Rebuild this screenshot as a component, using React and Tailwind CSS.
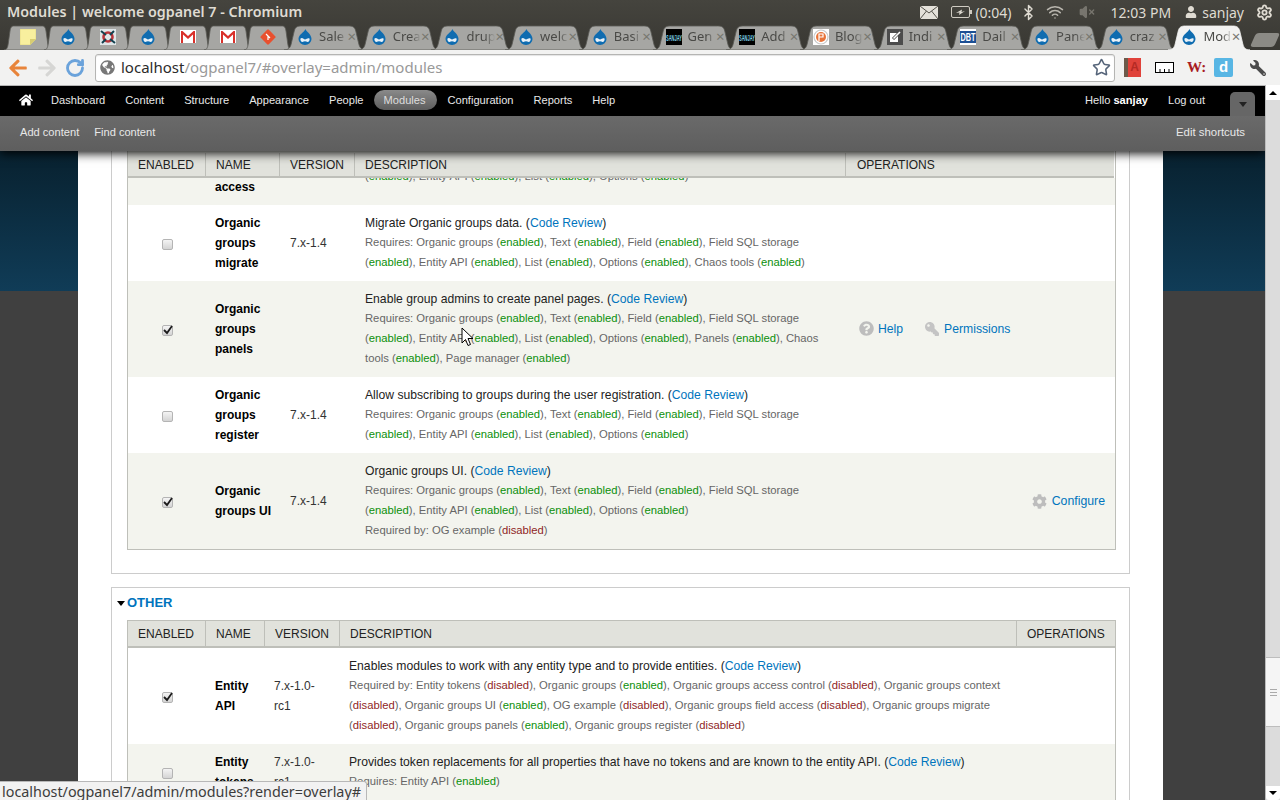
import React from 'react';
import { Bluetooth, Wifi, VolumeX, RotateCw, Star, Settings } from 'lucide-react';
import { FaHome, FaKey, FaCog, FaQuestionCircle, FaUser, FaGlobeAmericas, FaArrowLeft, FaArrowRight, FaWrench } from 'react-icons/fa';

const PINNED = ['note', 'drupal', 'ring', 'drupal', 'gmail', 'gmail', 'git'];
const TABS = [
  ['drupal', 'Sale'], ['drupal', 'Crea'], ['drupal', 'drup'], ['drupal', 'welc'], ['drupal', 'Basi'],
  ['sanjay', 'Gen'], ['sanjay', 'Add'], ['blog', 'Blog'], ['edit', 'Indi'], ['dbt', 'Dail'],
  ['drupal', 'Pane'], ['drupal', 'craz'],
];

const TABLE_ONE = [
  {
    name: 'Organic groups migrate', version: '7.x-1.4', check: false,
    title: 'Migrate Organic groups data.',
    info: 'Requires: Organic groups (enabled), Text (enabled), Field (enabled), Field SQL storage (enabled), Entity API (enabled), List (enabled), Options (enabled), Chaos tools (enabled)',
  },
  {
    name: 'Organic groups panels', version: '', check: true, ops: 'panels',
    title: 'Enable group admins to create panel pages.',
    info: 'Requires: Organic groups (enabled), Text (enabled), Field (enabled), Field SQL storage (enabled), Entity API (enabled), List (enabled), Options (enabled), Panels (enabled), Chaos tools (enabled), Page manager (enabled)',
  },
  {
    name: 'Organic groups register', version: '7.x-1.4', check: false,
    title: 'Allow subscribing to groups during the user registration.',
    info: 'Requires: Organic groups (enabled), Text (enabled), Field (enabled), Field SQL storage (enabled), Entity API (enabled), List (enabled), Options (enabled)',
  },
  {
    name: 'Organic groups UI', version: '7.x-1.4', check: true, ops: 'configure',
    title: 'Organic groups UI.',
    info: 'Requires: Organic groups (enabled), Text (enabled), Field (enabled), Field SQL storage (enabled), Entity API (enabled), List (enabled), Options (enabled)',
    extra: 'Required by: OG example (disabled)',
  },
];

const TABLE_TWO = [
  {
    name: 'Entity API', version: '7.x-1.0-rc1', check: true,
    title: 'Enables modules to work with any entity type and to provide entities.',
    info: 'Required by: Entity tokens (disabled), Organic groups (enabled), Organic groups access control (disabled), Organic groups context (disabled), Organic groups UI (enabled), OG example (disabled), Organic groups field access (disabled), Organic groups migrate (disabled), Organic groups panels (enabled), Organic groups register (disabled)',
  },
  {
    name: 'Entity tokens', version: '7.x-1.0-rc1', check: false,
    title: 'Provides token replacements for all properties that have no tokens and are known to the entity API.',
    info: 'Requires: Entity API (enabled)',
  },
];

function Favicon({ kind }) {
  if (kind === 'drupal') {
    return (
      <svg width="16" height="16" viewBox="0 0 16 16" className="shrink-0">
        <path d="M8.5 0C9 2.5 14.5 5 14.5 10A6.5 6 0 0 1 1.5 10C1.5 5.5 7 3.5 8.5 0Z" fill="#0f6cb0" />
        <path d="M3.5 9.5C5 8 7 10 8 10.5C9.5 10 11 8.5 12.5 9.5C13 11 12 13 10.5 13C9 12 7 12 5.5 13C4 13 3 11 3.5 9.5Z" fill="#e8f1f8" />
      </svg>
    );
  }
  if (kind === 'note') {
    return (
      <svg width="16" height="16" viewBox="0 0 16 16" className="shrink-0">
        <path d="M0 0H16V10L10 16H0Z" fill="#f8ef9e" stroke="#d9cf7a" strokeWidth="0.6" />
        <path d="M10 16V10H16Z" fill="#d8cd72" />
      </svg>
    );
  }
  if (kind === 'gmail') {
    return (
      <svg width="16" height="13" viewBox="0 0 16 13" className="shrink-0">
        <rect width="16" height="13" fill="#ffffff" />
        <path d="M1 13V1H2.5L8 6L13.5 1H15V13H13V4.5L8 9L3 4.5V13Z" fill="#d9302a" />
      </svg>
    );
  }
  if (kind === 'ring') {
    return (
      <svg width="16" height="16" viewBox="0 0 16 16" className="shrink-0">
        <rect width="16" height="16" fill="#dfe6e8" />
        <circle cx="8" cy="8" r="4.5" fill="none" stroke="#b8343a" strokeWidth="2.6" />
        <path d="M1 2L6 6M15 14L10 10M14 2L10 6M2 14L6 10" stroke="#12404f" strokeWidth="2" />
      </svg>
    );
  }
  if (kind === 'git') {
    return (
      <svg width="16" height="16" viewBox="0 0 16 16" className="shrink-0">
        <rect x="2.3" y="2.3" width="11.4" height="11.4" rx="1.2" transform="rotate(45 8 8)" fill="#e8502f" />
        <path d="M6 5L10 9M8 7V11" stroke="#ffffff" strokeWidth="1.2" />
      </svg>
    );
  }
  if (kind === 'sanjay') {
    return (
      <svg width="16" height="16" viewBox="0 0 16 16" className="shrink-0">
        <rect width="16" height="16" fill="#000000" />
        <text x="0" y="11.5" textLength="16" lengthAdjust="spacingAndGlyphs" fontSize="9" fontWeight="bold" fontFamily="Liberation Sans, sans-serif" fill="#7fd3e4">SANJAY</text>
      </svg>
    );
  }
  if (kind === 'blog') {
    return (
      <svg width="16" height="16" viewBox="0 0 16 16" className="shrink-0">
        <rect width="16" height="16" fill="#ffffff" />
        <circle cx="8" cy="8" r="7" fill="none" stroke="#c9c9c9" strokeWidth="1.2" />
        <circle cx="8" cy="8" r="5" fill="#e8743a" />
        <path d="M6 12V5H10V8H6" fill="none" stroke="#ffffff" strokeWidth="1.2" />
      </svg>
    );
  }
  if (kind === 'edit') {
    return (
      <svg width="16" height="16" viewBox="0 0 16 16" className="shrink-0">
        <rect width="16" height="16" fill="#4c4c4c" />
        <rect x="3" y="4" width="8" height="9" fill="#ffffff" />
        <path d="M6 10L13 3" stroke="#4c4c4c" strokeWidth="3" />
        <path d="M6.5 9.5L13 3" stroke="#ffffff" strokeWidth="1.6" />
      </svg>
    );
  }
  return (
    <svg width="16" height="16" viewBox="0 0 16 16" className="shrink-0">
      <rect width="16" height="16" fill="#ffffff" />
      <rect y="2" width="16" height="12" fill="#1c4f94" />
      <text x="0.5" y="12" textLength="15" lengthAdjust="spacingAndGlyphs" fontSize="11" fontWeight="bold" fontFamily="Liberation Sans, sans-serif" fill="#ffffff">DBT</text>
    </svg>
  );
}

function TabShape({ active }) {
  return (
    <svg className="absolute inset-0 w-full h-full" viewBox="0 0 80 25" preserveAspectRatio="none">
      <path
        d="M0 25C4 25 6 23 7 19L10 6C11 2 13 1 17 1H63C67 1 69 2 70 6L73 19C74 23 76 25 80 25Z"
        fill={active ? '#f2f2f1' : '#a6a6a3'}
        stroke={active ? '#f2f2f1' : '#5a5a56'}
        strokeWidth="0.8"
        vectorEffect="non-scaling-stroke"
      />
    </svg>
  );
}

function PinnedTab({ kind }) {
  return (
    <div className="relative w-[48px] h-[25px] -mr-[8px] shrink-0 flex items-center justify-center pb-[2px]">
      <TabShape />
      <div className="relative"><Favicon kind={kind} /></div>
    </div>
  );
}

function Tab({ kind, label, active }) {
  return (
    <div className={`relative w-[82px] h-[25px] -mr-[8.3px] shrink-0 flex items-center pl-[13px] pr-[10px] pb-[2px] ${active ? 'z-10' : ''}`}>
      <TabShape active={active} />
      <div className="relative"><Favicon kind={kind} /></div>
      <div className="relative ml-[6px] w-[29px] whitespace-nowrap text-[13px] text-[#4a4a47] [mask-image:linear-gradient(to_right,black_65%,transparent)]">
        {label}
      </div>
      <div className="relative ml-auto text-[15px] leading-none text-[#77776f]">×</div>
    </div>
  );
}

function TitleBar() {
  return (
    <div className="h-[24px] flex items-center justify-between text-[#dfdbd2]">
      <div className="pl-[7px] text-[14.3px] font-semibold whitespace-nowrap">Modules | welcome ogpanel 7 - Chromium</div>
      <div className="flex items-center text-[14px] whitespace-nowrap pr-[7px]">
        <svg width="18" height="13" viewBox="0 0 18 13">
          <rect width="18" height="13" fill="#e4e1da" />
          <path d="M0 0L9 7L18 0M0 13L6.5 5M18 13L11.5 5" fill="none" stroke="#55534c" strokeWidth="1" />
        </svg>
        <svg width="21" height="12" viewBox="0 0 21 12" className="ml-[13px]">
          <rect x="0.5" y="0.5" width="18" height="11" rx="1.5" fill="none" stroke="#cfcbc2" />
          <rect x="19" y="4" width="2" height="4" fill="#cfcbc2" />
          <path d="M5 7L11 3.5L10.5 6L14 5L8 9L8.5 6.5Z" fill="#dfdbd2" />
        </svg>
        <span className="ml-[3px]">(0:04)</span>
        <Bluetooth size={17} className="ml-[8px]" />
        <Wifi size={18} className="ml-[9px] text-[#b9b6ae]" />
        <VolumeX size={16} fill="currentColor" className="ml-[15px] text-[#77756e]" />
        <span className="ml-[16px]">12:03 PM</span>
        <FaUser size={12} className="ml-[14px]" />
        <span className="ml-[5px]">sanjay</span>
        <Settings size={17} strokeWidth={2.6} className="ml-[12px]" />
      </div>
    </div>
  );
}

function TabStrip() {
  return (
    <div className="h-[26px] flex items-end pl-[4px] overflow-hidden">
      {PINNED.map((kind, i) => <PinnedTab key={i} kind={kind} />)}
      {TABS.map(([kind, label], i) => <Tab key={i} kind={kind} label={label} />)}
      <Tab kind="drupal" label="Mod" active />
      <div className="relative w-[24px] h-[14px] ml-[11px] mb-[3px] shrink-0 bg-[#8b8a85] rounded-[3px] -skew-x-[24deg]" />
    </div>
  );
}

function AddressBar() {
  return (
    <div className="h-[35px] bg-[#f2f2f1] flex items-center">
      <FaArrowLeft size={20} className="ml-[8px] text-[#e8843a]" />
      <FaArrowRight size={20} className="ml-[9px] text-[#d6d6d4]" />
      <RotateCw size={20} strokeWidth={3.4} className="ml-[8px] text-[#6ba3db]" />
      <div className="ml-[10px] w-[1020px] h-[28px] bg-white border border-[#b5b5b3] rounded-[3px] flex items-center pl-[3px] pr-[3px] shadow-[inset_0_1px_1px_#e4e4e4]">
        <FaGlobeAmericas size={15} className="ml-[1px] text-[#777777]" />
        <div className="ml-[6px] text-[15px] whitespace-nowrap text-[#999999]">
          <span className="text-[#2b2b2b]">localhost</span>/ogpanel7/#overlay=admin/modules
        </div>
        <Star size={19} strokeWidth={2} className="ml-auto text-[#56657a]" />
      </div>
      <div className="ml-[9px] w-[17px] h-[19px] flex shrink-0">
        <div className="w-[4px] bg-[#6d5a4a]" />
        <div className="flex-1 bg-[#e0423a] text-[#b52a24] text-[12px] font-bold leading-[18px] text-center font-['Liberation_Sans',sans-serif]">A</div>
      </div>
      <svg width="19" height="11" viewBox="0 0 19 11" className="ml-[14px] shrink-0">
        <rect x="0.5" y="0.5" width="18" height="10" fill="#ffffff" stroke="#000000" />
        <path d="M5 10V7M9.5 10V7M14 10V7" stroke="#000000" />
      </svg>
      <div className="ml-[13px] w-[15px] text-[15px] font-bold leading-none whitespace-nowrap text-[#a81c22] font-['Liberation_Serif',serif]">W:</div>
      <div className="ml-[12px] w-[19px] h-[19px] rounded-[2px] bg-[#58b6e4] flex items-center justify-center text-white text-[15px] font-bold font-['Liberation_Sans',sans-serif] shrink-0">d</div>
      <FaWrench size={16} className="ml-[17px] -scale-x-100 text-[#4b4b4b]" />
    </div>
  );
}

function Toolbar() {
  const items = ['Dashboard', 'Content', 'Structure', 'Appearance', 'People', 'Modules', 'Configuration', 'Reports', 'Help'];
  return (
    <div className="relative z-20 shadow-[0_2px_10px_#000000] text-[11.1px] font-['Liberation_Sans',sans-serif] border-t border-[#b5b5b5]">
      <div className="h-[30px] pb-[2px] bg-black flex items-center text-[#e8e8e8] whitespace-nowrap">
        <FaHome size={14} className="ml-[19px] mr-[8px] text-white" />
        {items.map(item => (
          <div
            key={item}
            className={`leading-[20px] ${item === 'Modules' ? 'pl-[10px] pr-[12px] bg-[linear-gradient(to_bottom,#8a8a8a,#5c5c5c)] rounded-[10px] text-[#dddddd]' : 'px-[10px]'}`}
          >
            {item}
          </div>
        ))}
        <div className="ml-auto px-[10px]">Hello <b className="text-white">sanjay</b></div>
        <div className="px-[10px]">Log out</div>
        <div className="ml-[15px] mr-[10px] self-end -mb-[2px] w-[25px] h-[24px] bg-[#666666] rounded-t-[5px] flex items-center justify-center">
          <div className="w-0 h-0 border-x-[4px] border-x-transparent border-t-[5px] border-t-[#222222]" />
        </div>
      </div>
      <div className="h-[35px] pb-[2px] bg-[linear-gradient(to_bottom,#6a6a6a,#5e5e5e)] flex items-center text-[#e8e8e8] whitespace-nowrap">
        <div className="ml-[20px]">Add content</div>
        <div className="ml-[15px]">Find content</div>
        <div className="ml-auto mr-[20px] text-[11.4px]">Edit shortcuts</div>
      </div>
    </div>
  );
}

function Checkbox({ checked }) {
  return (
    <div className="relative w-[11px] h-[11px] mt-[3px] rounded-[2px] border border-[#b4b4b4] bg-[linear-gradient(to_bottom,#f4f4f4,#d4d4d4)]">
      {checked && (
        <svg width="12" height="12" viewBox="0 0 12 12" className="absolute -top-[2px] -left-[0.5px]">
          <path d="M2 6L5 9L10 2" fill="none" stroke="#1c1c1c" strokeWidth="1.8" />
        </svg>
      )}
    </div>
  );
}

// pinta (enabled) y (disabled) con su color
function withStatus(text) {
  return text.split(/(enabled|disabled)/).map((part, i) => {
    if (part === 'enabled') return <span key={i} className="text-[#0a8f0a]">enabled</span>;
    if (part === 'disabled') return <span key={i} className="text-[#8f1f1f]">disabled</span>;
    return part;
  });
}

function Operations({ kind }) {
  if (kind === 'panels') {
    return (
      <div className="flex items-center pl-[13px] whitespace-nowrap text-[12.2px]">
        <FaQuestionCircle size={15} className="text-[#bdbdbd]" />
        <a className="ml-[4px] text-[#0074bd]">Help</a>
        <FaKey size={14} className="ml-[22px] -scale-x-100 text-[#c4c4c4]" />
        <a className="ml-[5px] text-[#0074bd]">Permissions</a>
      </div>
    );
  }
  if (kind === 'configure') {
    return (
      <div className="flex items-center justify-end pr-[10px] whitespace-nowrap text-[12.3px]">
        <FaCog size={15} className="mr-[5px] text-[#bdbdbd]" />
        <a className="text-[#0074bd]">Configure</a>
      </div>
    );
  }
  return null;
}

function ModuleRow({ mod, even, cols }) {
  return (
    <div className={`grid items-center ${cols} ${even ? 'bg-[#f3f4ee]' : 'bg-white'}`}>
      <div className="flex justify-center"><Checkbox checked={mod.check} /></div>
      <div className="pl-[9px] pr-[5px] font-bold text-black leading-[20px]">{mod.name}</div>
      <div className="pl-[9px] pr-[20px] text-[#333333] leading-[20px]">{mod.version}</div>
      <div className="pl-[9px] pr-[5px] pt-[8px] pb-[9px] leading-[20px] text-[#222222]">
        <div className="text-[12.16px]">{mod.title} (<a className="text-[#0074bd]">Code Review</a>)</div>
        <div className="-mt-[1px] text-[11.26px] text-[#666666]">{withStatus(mod.info)}</div>
        {mod.extra && <div className="text-[11.26px] text-[#666666]">{withStatus(mod.extra)}</div>}
      </div>
      <Operations kind={mod.ops} />
    </div>
  );
}

function HeaderCell({ children, className }) {
  return (
    <div className={`h-full flex items-center border-r border-[#bebfb9] ${className}`}>{children}</div>
  );
}

function FirstTable() {
  const cols = 'grid-cols-[78px_75px_75px_490px_1fr]';
  return (
    <div className="border-x border-b border-[#bebfb9]">
      <div className="h-[27px] pt-[2px] w-[986px] bg-[#e1e2dc] border-b-2 border-[#bebfb9] grid grid-cols-[78px_74px_75px_491px_1fr] items-center text-[#222222]">
        <HeaderCell className="pl-[10px]">ENABLED</HeaderCell>
        <HeaderCell className="pl-[10px]">NAME</HeaderCell>
        <HeaderCell className="pl-[10px]">VERSION</HeaderCell>
        <HeaderCell className="pl-[10px]">DESCRIPTION</HeaderCell>
        <div className="pl-[11px]">OPERATIONS</div>
      </div>
      <div className={`h-[27px] overflow-hidden grid ${cols} bg-[#f3f4ee]`}>
        <div />
        <div className="pl-[9px] -mt-[1px] font-bold leading-[20px]">access</div>
        <div />
        <div className="pl-[9px] -mt-[12px] text-[11.26px] leading-[20px] text-[#666666] whitespace-nowrap">
          {withStatus('(enabled), Entity API (enabled), List (enabled), Options (enabled)')}
        </div>
      </div>
      {TABLE_ONE.map((mod, i) => <ModuleRow key={mod.name} mod={mod} even={i % 2 === 1} cols={cols} />)}
    </div>
  );
}

function SecondTable() {
  const cols = 'grid-cols-[78px_59px_75px_675px_1fr]';
  return (
    <div className="border-x border-t border-[#bebfb9]">
      <div className="h-[27px] bg-[#e1e2dc] border-b-2 border-[#bebfb9] grid grid-cols-[78px_59px_75px_677px_1fr] items-center text-[#222222]">
        <HeaderCell className="pl-[10px]">ENABLED</HeaderCell>
        <HeaderCell className="pl-[10px]">NAME</HeaderCell>
        <HeaderCell className="pl-[10px]">VERSION</HeaderCell>
        <HeaderCell className="pl-[10px]">DESCRIPTION</HeaderCell>
        <div className="pl-[10px]">OPERATIONS</div>
      </div>
      {TABLE_TWO.map((mod, i) => <ModuleRow key={mod.name} mod={mod} even={i % 2 === 1} cols={cols} />)}
    </div>
  );
}

function Overlay() {
  return (
    <div className="ml-[78px] w-[1085px] bg-white px-[33px] text-[12px] font-['Liberation_Sans',sans-serif]">
      <div className="border-x border-b border-[#cccccc] pl-[15px] pr-[13px] pb-[23px]">
        <FirstTable />
      </div>
      <div className="mt-[13px] border border-[#cccccc] pl-[15px] pr-[13px] pb-[20px]">
        <div className="h-[32px] pb-[2px] flex items-center">
          <div className="-ml-[10px] mr-[2px] w-0 h-0 border-x-[4px] border-x-transparent border-t-[5px] border-t-black" />
          <a className="text-[13px] font-bold text-[#0074bd]">OTHER</a>
        </div>
        <SecondTable />
      </div>
    </div>
  );
}

function Scrollbar() {
  return (
    <div className="w-[15px] shrink-0 bg-[#dcdcdc] flex flex-col border-l border-[#bdbdbd]">
      <div className="h-[15px] bg-white flex items-center justify-center">
        <div className="w-0 h-0 border-x-[4px] border-x-transparent border-b-[4px] border-b-black" />
      </div>
      <div className="mt-[557px] h-[70px] bg-[#f5f5f5] border-y border-[#bdbdbd] flex flex-col items-center justify-center gap-[2px]">
        <div className="w-[7px] h-px bg-[#aaaaaa]" />
        <div className="w-[7px] h-px bg-[#aaaaaa]" />
        <div className="w-[7px] h-px bg-[#aaaaaa]" />
      </div>
      <div className="mt-auto h-[14px] bg-white rounded-b-[3px] flex items-center justify-center">
        <div className="w-0 h-0 border-x-[4px] border-x-transparent border-t-[4px] border-t-black" />
      </div>
    </div>
  );
}

export default function App() {
  return (
    <div className="relative w-[1280px] h-[800px] overflow-hidden font-['Noto_Sans',sans-serif]">
      <div className="bg-[linear-gradient(to_bottom,#45443e,#393833)]">
        <TitleBar />
        <TabStrip />
      </div>
      <AddressBar />
      <div className="flex h-[715px]">
        <div className="flex-1 min-w-0 flex flex-col overflow-hidden">
          <Toolbar />
          <div className="flex-1 overflow-hidden bg-[linear-gradient(to_bottom,#08212f_0,#103c57_140px,#404040_140px)]">
            <Overlay />
          </div>
        </div>
        <Scrollbar />
      </div>

      {/* puntero del mouse */}
      <svg width="14" height="20" viewBox="0 0 14 20" className="absolute left-[461px] top-[327px] z-30">
        <path d="M1 1V16L4.5 12.5L7 18.5L9.5 17.5L7 11.5H12Z" fill="#ffffff" stroke="#000000" strokeWidth="1" />
      </svg>

      {/* burbuja de estado */}
      <div className="absolute left-0 bottom-0 z-30 h-[19px] w-[367px] bg-[#f2f2f2] border-t border-r border-[#b8b8b8] rounded-tr-[3px] pl-[2px] text-[14.35px] leading-[19px] text-[#3c3c3c] whitespace-nowrap">
        localhost/ogpanel7/admin/modules?render=overlay#
      </div>
    </div>
  );
}
